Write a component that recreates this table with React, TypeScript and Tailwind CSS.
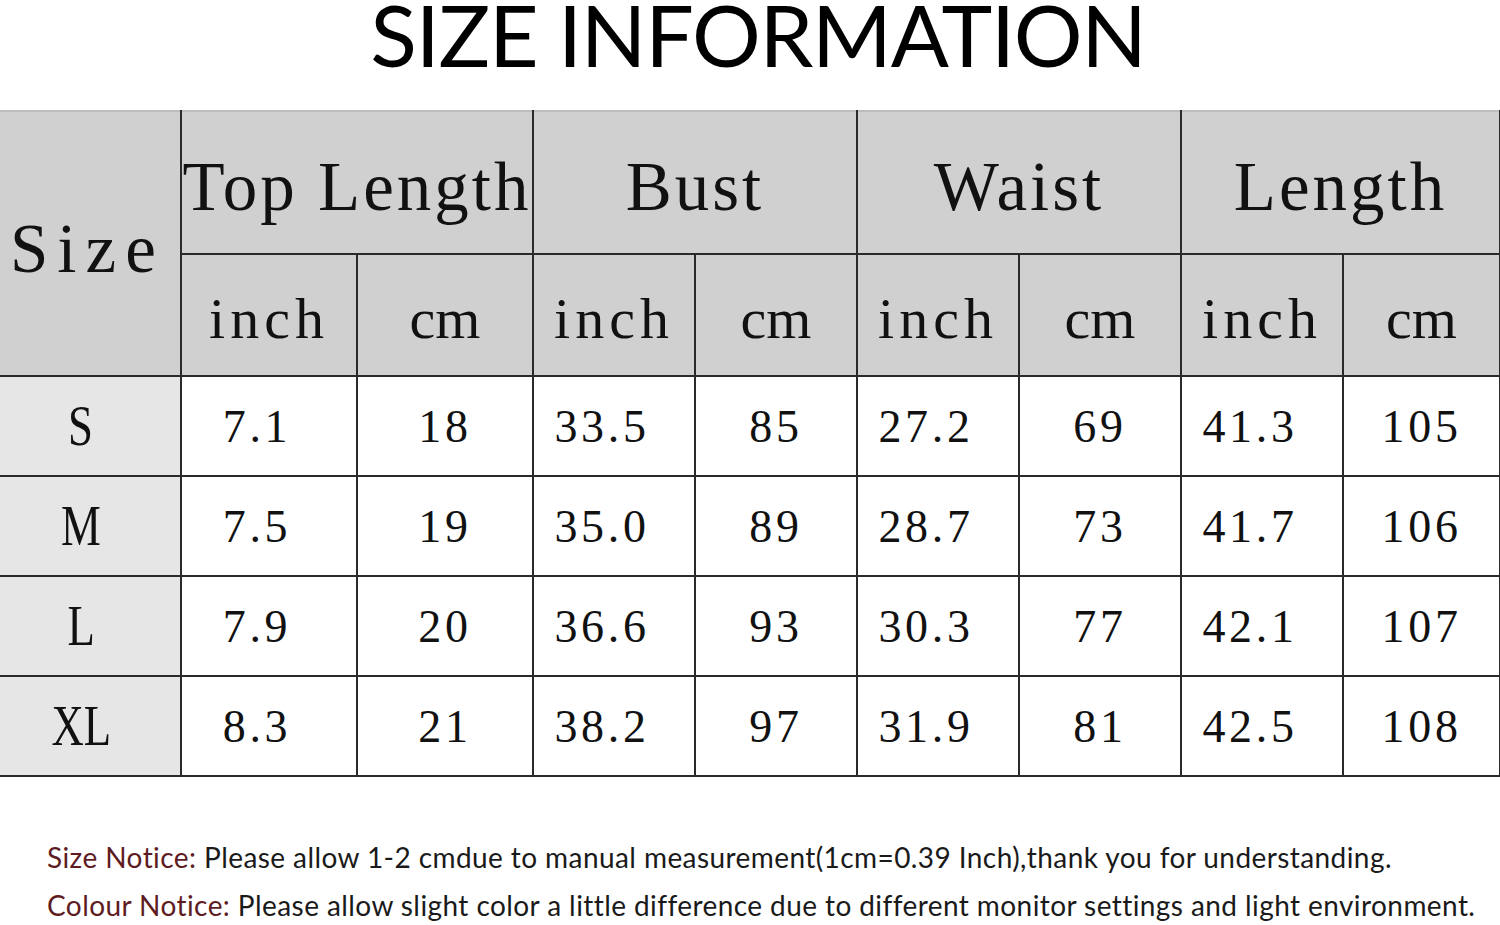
import React from "react";

type Row = { size: string; values: string[] };

const ROWS: Row[] = [
	{ size: "S", values: ["7.1", "18", "33.5", "85", "27.2", "69", "41.3", "105"] },
	{ size: "M", values: ["7.5", "19", "35.0", "89", "28.7", "73", "41.7", "106"] },
	{ size: "L", values: ["7.9", "20", "36.6", "93", "30.3", "77", "42.1", "107"] },
	{ size: "XL", values: ["8.3", "21", "38.2", "97", "31.9", "81", "42.5", "108"] },
];

const GROUPS = ["Top Length", "Bust", "Waist", "Length"];
const COL_WIDTHS = [181, 176, 176, 162, 162, 162, 162, 162, 157];

const serif = "font-['Liberation_Serif','DejaVu_Serif',serif]";

export default function App() {
	return (
		<div className="h-[925px] w-[1500px] overflow-hidden bg-white text-[#111]">
			<h1 className="pt-[2px] pl-[16px] text-center font-['Lato','Noto_Sans',sans-serif] text-[86px] leading-[64px] tracking-[-0.015em] text-black">
				SIZE INFORMATION
			</h1>
			<div className="h-[44px]" />
			<SizeTable />
			<Notices />
		</div>
	);
}

function SizeTable() {
	return (
		<table className={`w-[1500px] table-fixed border-collapse ${serif}`}>
			<colgroup>
				{COL_WIDTHS.map((w, i) => (
					<col key={i} style={{ width: w }} />
				))}
			</colgroup>
			<thead>
				<tr className="h-[143px] bg-[#d1d0d1]">
					<th
						rowSpan={2}
						className="border-t-2 border-r-2 border-b-2 border-t-[#bdbdbd] border-r-[#2a2a2a] border-b-[#2a2a2a] pt-[12px] pl-[10px] text-left text-[69px] font-normal tracking-[9px]"
					>
						Size
					</th>
					{GROUPS.map((g) => (
						<th
							key={g}
							colSpan={2}
							className="whitespace-nowrap border-t-2 border-r-2 border-b-2 border-t-[#bdbdbd] border-r-[#2a2a2a] border-b-[#2a2a2a] pt-[10px] text-[69px] font-normal tracking-[3px]"
						>
							{g}
						</th>
					))}
				</tr>
				<tr className="h-[122px] bg-[#d1d0d1]">
					{GROUPS.flatMap((g) => [
						<th
							key={`${g}-inch`}
							className="border-r-2 border-b-2 border-[#2a2a2a] pt-[6px] text-[58px] font-normal tracking-[5px]"
						>
							inch
						</th>,
						<th
							key={`${g}-cm`}
							className="border-r-2 border-b-2 border-[#2a2a2a] pt-[6px] text-[58px] font-normal"
						>
							cm
						</th>,
					])}
				</tr>
			</thead>
			<tbody>
				{ROWS.map((r) => (
					<tr key={r.size} className="h-[100px]">
						<td className="border-r-2 border-b-2 border-[#2a2a2a] bg-[#e6e6e6] pr-[18px] text-center">
							<span className="inline-block scale-x-[0.8] text-[56px]">{r.size}</span>
						</td>
						{r.values.map((v, i) => (
							<td
								key={i}
								className={`border-r-2 border-b-2 border-[#2a2a2a] text-center text-[46px] tracking-[0.08em] ${
									i % 2 === 0 ? "pr-[24px]" : ""
								}`}
							>
								{v}
							</td>
						))}
					</tr>
				))}
			</tbody>
		</table>
	);
}

function Notices() {
	return (
		<div className="pt-[56px] pl-[47px] font-['Lato','Noto_Sans',sans-serif] text-[28px] leading-[48px] tracking-[0.015em] text-[#1a1a1a]">
			<p className="whitespace-nowrap">
				<span className="text-[#5e1c22]">Size Notice:</span> Please allow 1-2 cmdue to manual
				measurement(1cm=0.39 Inch),thank you for understanding.
			</p>
			<p className="whitespace-nowrap">
				<span className="text-[#5e1c22]">Colour Notice:</span> Please allow slight color a little
				difference due to different monitor settings and light environment.
			</p>
		</div>
	);
}
